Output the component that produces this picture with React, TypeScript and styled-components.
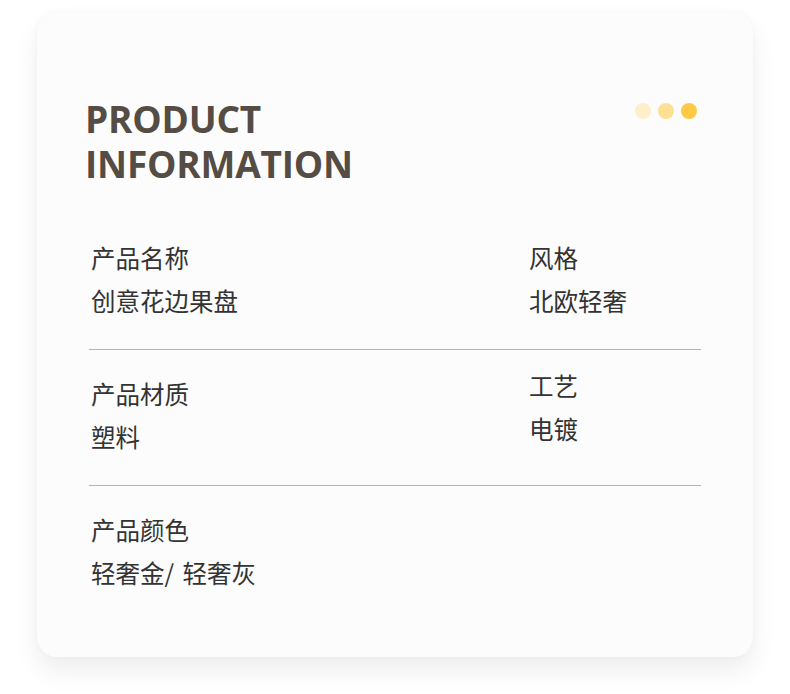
import styled, { createGlobalStyle } from "styled-components";

const GlobalStyle = createGlobalStyle`
  html, body {
    margin: 0;
    padding: 0;
    background: #ffffff;
  }
  body {
    font-family: "Noto Sans", "Noto Sans CJK SC", sans-serif;
  }
`;

interface Spec {
  label: string;
  value: string;
}

interface Row {
  left: Spec;
  right?: Spec;
  lift?: boolean;
}

const rows: Row[] = [
  {
    left: { label: "产品名称", value: "创意花边果盘" },
    right: { label: "风格", value: "北欧轻奢" },
  },
  {
    left: { label: "产品材质", value: "塑料" },
    right: { label: "工艺", value: "电镀" },
    lift: true,
  },
  {
    left: { label: "产品颜色", value: "轻奢金/ 轻奢灰" },
  },
];

const dots = ["#feefca", "#fee095", "#fec944"];

export default function App() {
  return (
    <>
      <GlobalStyle />
      <Page>
        <Card>
          <Header>
            <Title>
              <TitleLine>PRODUCT</TitleLine>
              <TitleLine>INFORMATION</TitleLine>
            </Title>
            <Dots>
              {dots.map((c) => (
                <Dot key={c} $color={c} />
              ))}
            </Dots>
          </Header>
          <Table>
            {rows.map((row, i) => (
              <SpecRow key={i} $first={i === 0}>
                <Cell>
                  <Label>{row.left.label}</Label>
                  <Value>{row.left.value}</Value>
                </Cell>
                {row.right && (
                  <Cell $lift={row.lift}>
                    <Label>{row.right.label}</Label>
                    <Value>{row.right.value}</Value>
                  </Cell>
                )}
              </SpecRow>
            ))}
          </Table>
        </Card>
      </Page>
    </>
  );
}

const Page = styled.div`
  width: 790px;
  height: 694px;
  padding: 12px 37px 0;
  box-sizing: border-box;
`;

const Card = styled.div`
  width: 716px;
  height: 645px;
  box-sizing: border-box;
  background: #fcfcfc;
  border-radius: 20px;
  box-shadow: 0 14px 26px rgba(0, 0, 0, 0.07), 0 0 6px rgba(0, 0, 0, 0.03);
  padding: 84px 56px 0 48px;
`;

const Header = styled.div`
  display: flex;
  justify-content: space-between;
  align-items: flex-start;
`;

const Title = styled.h1`
  margin: 0;
  font-family: "Open Sans", "Noto Sans", sans-serif;
  font-weight: 700;
  font-size: 37px;
  line-height: 45px;
  color: #554c44;
  letter-spacing: -0.2px;
`;

const TitleLine = styled.span`
  display: block;
  height: 45px;
`;

const Dots = styled.div`
  display: flex;
  gap: 7px;
  margin-top: 7px;
`;

const Dot = styled.span<{ $color: string }>`
  width: 16px;
  height: 16px;
  border-radius: 50%;
  background: ${(p) => p.$color};
`;

const Table = styled.div`
  margin: 50px 0 0 4px;
  width: 612px;
`;

const SpecRow = styled.div<{ $first?: boolean }>`
  display: grid;
  grid-template-columns: 438px 1fr;
  padding: ${(p) => (p.$first ? "0" : "22px")} 0 27px 2px;
  border-bottom: 1px solid #b4b4b4;

  &:last-child {
    border-bottom: none;
  }
`;

const Cell = styled.div<{ $lift?: boolean }>`
  display: flex;
  flex-direction: column;
  margin-top: ${(p) => (p.$lift ? "-8px" : "0")};
`;

const Label = styled.div`
  font-family: "Noto Sans CJK SC", sans-serif;
  font-size: 24.5px;
  line-height: 43px;
  color: #333333;
  word-spacing: 3px;
`;

const Value = styled(Label)``;
